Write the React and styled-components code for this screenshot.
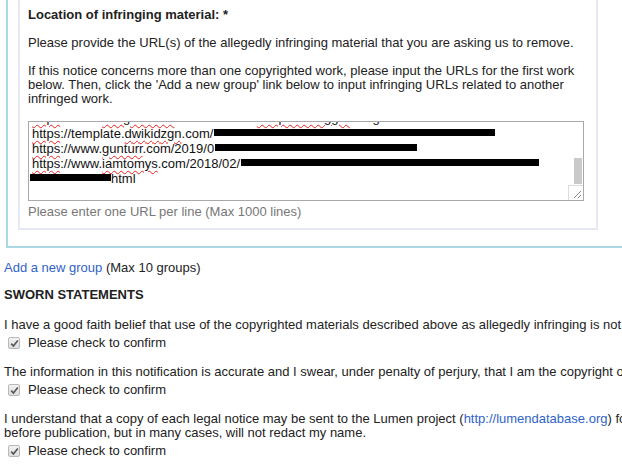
import React from 'react';
import styled, { createGlobalStyle } from 'styled-components';

const GlobalStyle = createGlobalStyle`
  html, body {
    margin: 0;
    padding: 0;
    background: #fff;
    overflow: hidden;
  }
  body {
    font-family: "Liberation Sans", Arial, sans-serif;
    font-size: 13px;
    line-height: 14px;
    color: #222;
  }
`;

const Page = styled.div`
  width: 1100px;
  padding-left: 4px;
`;

const GroupOuter = styled.div`
  margin-left: 2px;
  width: 900px;
  border-left: 2px solid #acd8e4;
  border-bottom: 2px solid #acd8e4;
  padding: 0 0 16px 10px;
`;

const GroupInner = styled.div`
  box-sizing: border-box;
  width: 580px;
  border: 2px solid #e7e8f6;
  border-top: none;
  padding: 8px 13px 9px 8px;
`;

const FieldLabel = styled.div`
  font-weight: bold;
  color: #222;
`;

const Para = styled.p`
  margin: 14px 0 0;
`;

const UrlBox = styled.div`
  box-sizing: border-box;
  position: relative;
  margin-top: 15px;
  width: 556px;
  height: 80px;
  border: 1px solid #a9a9a9;
  background: #fff;
  overflow: hidden;
`;

const UrlLines = styled.div`
  margin-top: -12px;
  padding-left: 3px;
  font-size: 13px;
  line-height: 15px;
  color: #111;
`;

const UrlLine = styled.div`
  white-space: nowrap;
  height: ${(p) => p.$h || 15}px;
`;

const Misspelt = styled.span`
  text-decoration: underline wavy #e52020;
  text-decoration-thickness: 1px;
  text-underline-offset: 2px;
`;

const Redacted = styled.span`
  display: inline-block;
  width: ${(p) => p.$w}px;
  height: 7px;
  margin-left: ${(p) => p.$shift || 0}px;
  background: #000;
  vertical-align: 2px;
`;

const ScrollThumb = styled.div`
  position: absolute;
  right: 1px;
  top: 36px;
  width: 8px;
  height: 26px;
  background: #c9c9c9;
`;

const Resizer = styled.div`
  position: absolute;
  right: 0;
  bottom: 0;
  width: 15px;
  height: 15px;
  box-sizing: border-box;
  border-top: 1px solid #dcdcdc;
  border-left: 1px solid #dcdcdc;
  background: #fff;
  svg {
    position: absolute;
    right: 1px;
    bottom: 1px;
  }
`;

const Hint = styled.div`
  margin-top: 4px;
  color: #777;
`;

const AddRow = styled.div`
  margin-top: 13px;
`;

const Link = styled.a`
  color: #3063c9;
  text-decoration: none;
`;

const SectionTitle = styled.div`
  margin-top: 13px;
  font-weight: bold;
  color: #222;
`;

const Statement = styled.div`
  margin-top: ${(p) => (p.$first ? 16 : 15)}px;
  white-space: nowrap;
  span {
    display: block;
  }
`;

const ConfirmRow = styled.label`
  display: flex;
  align-items: center;
  gap: 8px;
  margin-top: 4px;
  padding-left: 4px;
  height: 14px;
`;

const Check = styled.span`
  box-sizing: border-box;
  display: inline-flex;
  align-items: center;
  justify-content: center;
  width: 12px;
  height: 12px;
  border: 1px solid #b8b8b8;
  border-radius: 2px;
  background: linear-gradient(#f2f2f2, #dddddd);
`;

function CheckMark() {
  return (
    <Check>
      <svg width="9" height="9" viewBox="0 0 9 9">
        <path d="M1.2 4.6 L3.4 7 L7.8 1.4" fill="none" stroke="#555" strokeWidth="1.6" />
      </svg>
    </Check>
  );
}

function Confirm() {
  return (
    <ConfirmRow>
      <CheckMark />
      Please check to confirm
    </ConfirmRow>
  );
}

export default function App() {
  return (
    <Page>
      <GlobalStyle />
      <GroupOuter>
        <GroupInner>
          <FieldLabel>Location of infringing material: *</FieldLabel>
          <Para>Please provide the URL(s) of the allegedly infringing material that you are asking us to remove.</Para>
          <Para>
            If this notice concerns more than one copyrighted work, please input the URLs for the first work
            below. Then, click the 'Add a new group' link below to input infringing URLs related to another
            infringed work.
          </Para>
          <UrlBox>
            <UrlLines>
              <UrlLine $h={16}>
                <Misspelt>https</Misspelt>://www.<Misspelt>kangrohman</Misspelt>.com/2018/08/<Misspelt>templateblogger</Misspelt>-magazine.html
              </UrlLine>
              <UrlLine>
                <Misspelt>https</Misspelt>://template.<Misspelt>dwikidzgn</Misspelt>.com/
                <Redacted $w={281} $shift={1} />
              </UrlLine>
              <UrlLine>
                <Misspelt>https</Misspelt>://www.<Misspelt>gunturr</Misspelt>.com/2019/0
                <Redacted $w={202} $shift={1} />
              </UrlLine>
              <UrlLine>
                <Misspelt>https</Misspelt>://www.<Misspelt>iamtomys</Misspelt>.com/2018/02/
                <Redacted $w={298} $shift={1} />
              </UrlLine>
              <UrlLine>
                <Redacted $w={81} $shift={-2} />html
              </UrlLine>
            </UrlLines>
            <ScrollThumb />
            <Resizer>
              <svg width="9" height="9" viewBox="0 0 9 9">
                <path d="M1 8 L8 1 M5 8 L8 5" stroke="#888" strokeWidth="1" />
              </svg>
            </Resizer>
          </UrlBox>
          <Hint>Please enter one URL per line (Max 1000 lines)</Hint>
        </GroupInner>
      </GroupOuter>

      <AddRow>
        <Link href="#">Add a new group</Link> (Max 10 groups)
      </AddRow>

      <SectionTitle>SWORN STATEMENTS</SectionTitle>

      <Statement $first>
        I have a good faith belief that use of the copyrighted materials described above as allegedly infringing is not authorized by the copyright owner, its agent, or the law.
      </Statement>
      <Confirm />

      <Statement>
        The information in this notification is accurate and I swear, under penalty of perjury, that I am the copyright owner or am authorized to act on behalf of the owner.
      </Statement>
      <Confirm />

      <Statement>
        <span>
          I understand that a copy of each legal notice may be sent to the Lumen project (<Link href="#">http://lumendatabase.org</Link>) for publication and annotation. I understand that Lumen will redact my personal contact information
        </span>
        <span>before publication, but in many cases, will not redact my name.</span>
      </Statement>
      <Confirm />
    </Page>
  );
}
